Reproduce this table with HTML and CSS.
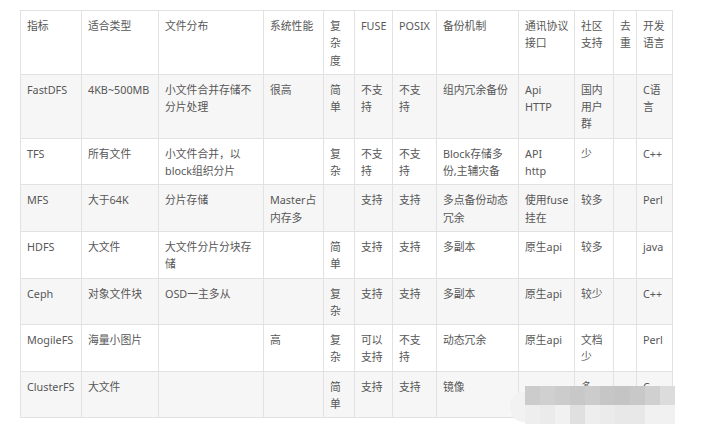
FILE: index.html
```html
<!DOCTYPE html>
<html lang="zh-CN">
<head>
<meta charset="utf-8">
<title>分布式文件系统对比</title>
<link rel="stylesheet" href="styles.css">
</head>
<body>
<div class="page">
  <table class="cmp">
    <colgroup>
      <col class="w61"><col class="w77"><col class="w105"><col class="w60"><col class="w31"><col class="w38"><col class="w44"><col class="w82"><col class="w56"><col class="w39"><col class="w23"><col class="w36">
    </colgroup>
    <thead>
      <tr><th>指标</th><th>适合类型</th><th>文件分布</th><th>系统性能</th><th>复杂度</th><th>FUSE</th><th>POSIX</th><th>备份机制</th><th>通讯协议接口</th><th>社区支持</th><th>去重</th><th>开发语言</th></tr>
    </thead>
    <tbody>
      <tr><td>FastDFS</td><td>4KB~500MB</td><td>小文件合并存储不分片处理</td><td>很高</td><td>简单</td><td>不支持</td><td>不支持</td><td>组内冗余备份</td><td>Api HTTP</td><td>国内用户群</td><td></td><td>C语言</td></tr>
      <tr><td>TFS</td><td>所有文件</td><td>小文件合并，以block组织分片</td><td></td><td>复杂</td><td>不支持</td><td>不支持</td><td>Block存储多份,主辅灾备</td><td>API<br>http</td><td>少</td><td></td><td>C++</td></tr>
      <tr><td>MFS</td><td>大于64K</td><td>分片存储</td><td>Master占内存多</td><td></td><td>支持</td><td>支持</td><td>多点备份动态冗余</td><td>使用fuse挂在</td><td>较多</td><td></td><td>Perl</td></tr>
      <tr><td>HDFS</td><td>大文件</td><td>大文件分片分块存储</td><td></td><td>简单</td><td>支持</td><td>支持</td><td>多副本</td><td>原生api</td><td>较多</td><td></td><td>java</td></tr>
      <tr><td>Ceph</td><td>对象文件块</td><td>OSD一主多从</td><td></td><td>复杂</td><td>支持</td><td>支持</td><td>多副本</td><td>原生api</td><td>较少</td><td></td><td>C++</td></tr>
      <tr><td>MogileFS</td><td>海量小图片</td><td></td><td>高</td><td>复杂</td><td>可以支持</td><td>不支持</td><td>动态冗余</td><td>原生api</td><td>文档少</td><td></td><td>Perl</td></tr>
      <tr><td>ClusterFS</td><td>大文件</td><td></td><td></td><td>简单</td><td>支持</td><td>支持</td><td>镜像</td><td></td><td>多</td><td></td><td>C</td></tr>
    </tbody>
  </table>
  <div class="mosaic" aria-hidden="true">
    <div class="blob"></div>
    <div class="grid">
      <span class="a1"></span><span class="a2"></span><span class="a1"></span><span class="a3"></span><span class="a1"></span><span class="a4"></span><span class="a5"></span><span class="a3"></span><span class="a2"></span><span class="a6"></span>
      <span class="b1"></span><span class="b2"></span><span class="b3"></span><span class="b4"></span><span class="b1"></span><span class="b2"></span><span class="b5"></span><span class="b5"></span><span class="b3"></span><span class="b3"></span>
    </div>
  </div>
</div>
</body>
</html>
```

FILE: styles.css
```css
html, body {
  margin: 0;
  padding: 0;
  background: #ffffff;
}

.page {
  position: relative;
  width: 709px;
  height: 424px;
  overflow: hidden;
  padding: 10px 0 0 20px;
  box-sizing: border-box;
}

.cmp {
  border-collapse: collapse;
  table-layout: fixed;
  width: 653px;
  font-family: "Noto Sans", "Noto Sans CJK SC", sans-serif;
  font-size: 10.8px;
  line-height: 17.3px;
  color: #575757;
}

.cmp th,
.cmp td {
  border: 1px solid #e2e2e2;
  padding: 6px 5px 5px 6px;
  text-align: left;
  vertical-align: top;
  font-weight: normal;
  word-break: normal;
  overflow-wrap: normal;
}

.cmp tbody tr:nth-child(odd) {
  background: #f6f6f6;
}

.w61 { width: 61px; }
.w77 { width: 77px; }
.w105 { width: 105px; }
.w60 { width: 60px; }
.w31 { width: 31px; }
.w38 { width: 38px; }
.w44 { width: 44px; }
.w82 { width: 82px; }
.w56 { width: 56px; }
.w39 { width: 39px; }
.w23 { width: 23px; }
.w36 { width: 36px; }

.mosaic {
  position: absolute;
  left: 505px;
  top: 386px;
  width: 170px;
  height: 38px;
}

.mosaic .blob {
  position: absolute;
  left: 5px;
  top: 6px;
  width: 26px;
  height: 30px;
  border-radius: 50%;
  background: #f2f2f2;
}

.mosaic .grid {
  position: absolute;
  left: 20px;
  top: 0;
  display: grid;
  grid-template-columns: repeat(10, 15px);
  grid-template-rows: 19px 19px;
}

.a1 { background: #cccccc; }
.a2 { background: #d0d0d0; }
.a3 { background: #c8c8c8; }
.a4 { background: #c6c6c6; }
.a5 { background: #c4c4c4; }
.a6 { background: #dcdcdc; }
.b1 { background: #eeeeee; }
.b2 { background: #ebebeb; }
.b3 { background: #f1f1f1; }
.b4 { background: #e0e0e0; }
.b5 { background: #e8e8e8; }
```
